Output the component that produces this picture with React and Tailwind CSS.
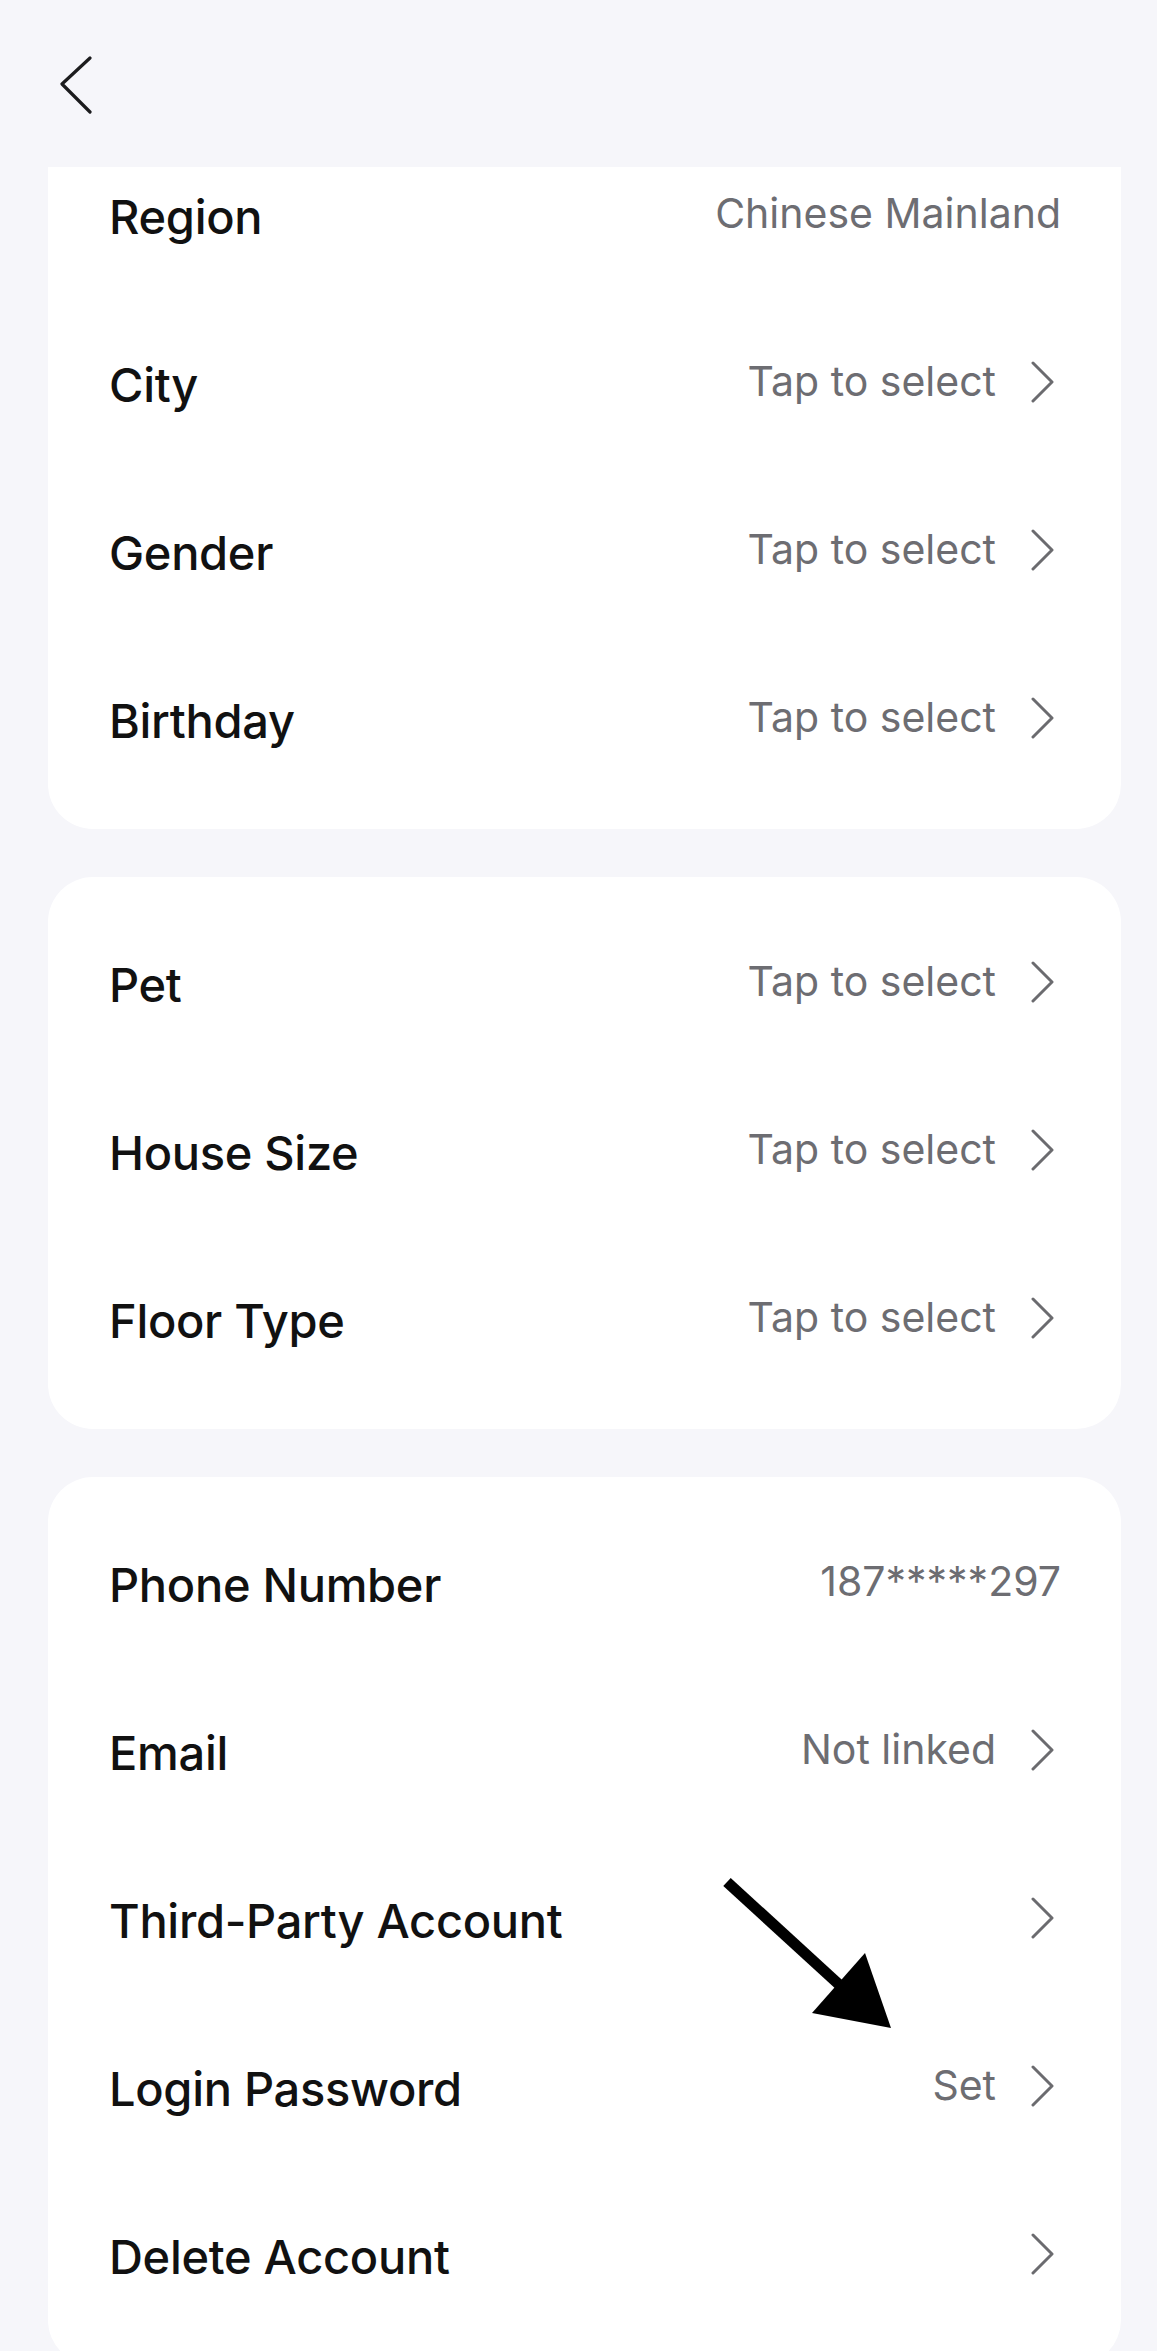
import { Fragment } from 'react';

const groups = [
  [
    { label: 'Region', value: 'Chinese Mainland', arrow: false },
    { label: 'City', value: 'Tap to select', arrow: true },
    { label: 'Gender', value: 'Tap to select', arrow: true },
    { label: 'Birthday', value: 'Tap to select', arrow: true },
  ],
  [
    { label: 'Pet', value: 'Tap to select', arrow: true },
    { label: 'House Size', value: 'Tap to select', arrow: true },
    { label: 'Floor Type', value: 'Tap to select', arrow: true },
  ],
  [
    { label: 'Phone Number', value: '187*****297', arrow: false },
    { label: 'Email', value: 'Not linked', arrow: true },
    { label: 'Third-Party Account', value: '', arrow: true },
    { label: 'Login Password', value: 'Set', arrow: true },
    { label: 'Delete Account', value: '', arrow: true },
  ],
];

function ChevronRight() {
  return (
    <svg width="30" height="42" viewBox="0 0 30 42" fill="none" className="shrink-0">
      <path d="M2 2 L21 21 L2 40" stroke="#6b6b6f" strokeWidth="3" strokeLinecap="round" strokeLinejoin="round" />
    </svg>
  );
}

function Row({ item }) {
  return (
    <div className="flex h-[168px] items-center justify-between">
      <span className="text-[47px] font-medium tracking-[-0.3px] text-[#111111]">{item.label}</span>
      <div className="mb-1.5 flex items-center gap-[35px]">
        {item.value && <span className="text-[41px] text-[#6d6d72]">{item.value}</span>}
        {item.arrow && <ChevronRight />}
      </div>
    </div>
  );
}

export default function App() {
  return (
    <div
      className="relative h-[2351px] overflow-hidden bg-[#f6f6fa]"
      style={{ fontFamily: 'Inter, Roboto, "Liberation Sans", sans-serif' }}
    >
      {/* top bar */}
      <div className="h-[167px] pl-[58px] pt-[56px]">
        <svg width="36" height="58" viewBox="0 0 36 58" fill="none">
          <path d="M32 2 L4 28 L32 56" stroke="#1c1c1e" strokeWidth="3.2" strokeLinecap="round" strokeLinejoin="round" />
        </svg>
      </div>

      <div className="flex flex-col gap-[48px] pl-[48px] pr-[36px]">
        {groups.map((rows, i) => (
          <div
            key={i}
            className={`overflow-hidden bg-white ${i === 0 ? 'rounded-b-[45px]' : 'rounded-[45px]'}`}
          >
            <div className={`pl-[61px] pr-[60px] py-6 ${i === 0 ? '-mt-[58px]' : ''}`}>
              {rows.map((r) => (
                <Fragment key={r.label}>
                  <Row item={r} />
                </Fragment>
              ))}
            </div>
          </div>
        ))}
      </div>

      {/* annotation arrow */}
      <svg className="pointer-events-none absolute left-0 top-0" width="1157" height="2351" viewBox="0 0 1157 2351">
        <line x1="727" y1="1882" x2="845" y2="1990" stroke="#000" strokeWidth="11" />
        <polygon points="865,1953 812,2013 891,2028" fill="#000" />
      </svg>
    </div>
  );
}
